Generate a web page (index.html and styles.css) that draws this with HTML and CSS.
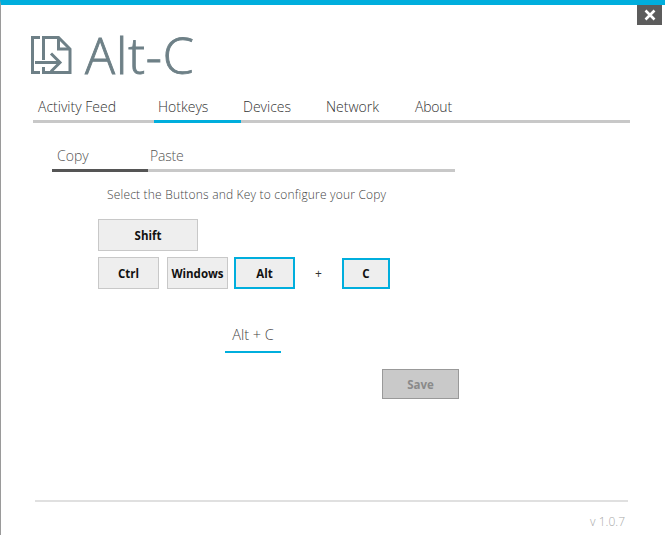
FILE: index.html
```html
<!DOCTYPE html>
<html lang="en">
<head>
<meta charset="utf-8">
<title>Alt-C</title>
<link rel="stylesheet" href="styles.css">
</head>
<body>
<div class="window">
  <button class="close" aria-label="Close">
    <svg width="12" height="12" viewBox="0 0 12 12"><path d="M1.5 1.5l9 9M10.5 1.5l-9 9" stroke="#fff" stroke-width="2.6" fill="none"/></svg>
  </button>
  <header class="brand">
    <svg class="logo" width="41" height="38" viewBox="0 0 41 38" fill="none" stroke="#6e8087" stroke-width="3">
      <path d="M9 1.5H1.5V36.5H9"/>
      <path d="M12.5 24V1.500H27.500L39 13V36.500H12.5V31"/>
      <path d="M27.500 1.500V13H39"/>
      <path d="M4 26.500H28"/>
      <path d="M20 17.500L29 26.500L20 35.500"/>
    </svg>
    <span class="brand-name">Alt-C</span>
  </header>
  <nav class="tabs">
    <a class="tab tab-feed">Activity Feed</a>
    <a class="tab tab-hotkeys active">Hotkeys</a>
    <a class="tab tab-devices">Devices</a>
    <a class="tab tab-network">Network</a>
    <a class="tab tab-about">About</a>
  </nav>
  <main class="panel">
    <div class="subtabs">
      <a class="subtab active">Copy</a>
      <a class="subtab">Paste</a>
    </div>
    <p class="hint">Select the Buttons and Key to configure your Copy</p>
    <div class="keys">
      <button class="key key-shift">Shift</button>
      <div class="key-row">
        <button class="key key-mod">Ctrl</button>
        <button class="key key-mod">Windows</button>
        <button class="key key-mod selected">Alt</button>
        <span class="plus">+</span>
        <button class="key key-letter selected">C</button>
      </div>
    </div>
    <div class="combo">Alt + C</div>
    <button class="save">Save</button>
  </main>
  <footer class="footer">v 1.0.7</footer>
</div>
</body>
</html>
```

FILE: styles.css
```css
* { box-sizing: border-box; }
html, body { margin: 0; padding: 0; background: #fff; }
body { font-family: "Open Sans", "Noto Sans", sans-serif; overflow: hidden; }
.window {
  position: relative;
  width: 665px;
  height: 535px;
  border-top: 5px solid #00aedd;
  border-left: 1px solid #9a9a9a;
  display: flex;
  flex-direction: column;
}
.close {
  position: absolute;
  top: 0;
  right: 3px;
  width: 25px;
  height: 20px;
  padding: 0;
  border: 0;
  background: #5c5c5c;
  display: flex;
  align-items: center;
  justify-content: center;
}
.brand {
  display: flex;
  align-items: center;
  height: 50px;
  margin-top: 25px;
  padding-left: 30px;
}
.logo { flex: none; }
.brand-name {
  margin-left: 13px;
  font-size: 50px;
  font-weight: 300;
  line-height: 50px;
  color: #6e8087;
  letter-spacing: 0.9px;
  -webkit-text-stroke: 0.9px #6e8087;
}
.tabs {
  display: flex;
  width: 597px;
  height: 43px;
  margin-left: 32px;
  border-bottom: 3px solid #c8c8c8;
  font-size: 14px;
  font-weight: 300;
  color: #333;
}
.tab {
  display: block;
  height: 43px;
  line-height: 22px;
  padding-top: 16px;
  white-space: nowrap;
}
.tab.active { border-bottom: 3px solid #00aedd; }
.tab-feed { width: 121px; padding-left: 5px; }
.tab-hotkeys { width: 87px; padding-left: 4px; }
.tab-devices { width: 85px; padding-left: 2px; }
.tab-network { width: 89px; }
.tab-about { width: 60px; letter-spacing: -0.2px; }
.panel {
  display: flex;
  flex-direction: column;
  align-items: flex-start;
  padding-left: 51px;
  flex: 1;
}
.subtabs {
  display: flex;
  width: 403px;
  height: 49px;
  border-bottom: 3px solid #c8c8c8;
  font-size: 14px;
  font-weight: 300;
  color: #555;
}
.subtab {
  display: block;
  width: 96px;
  height: 49px;
  padding: 22px 0 0 5px;
  line-height: 22px;
}
.subtab.active { border-bottom: 3px solid #555; }
.subtab + .subtab { padding-left: 2px; letter-spacing: -0.2px; }
.hint {
  margin: 14px 0 0 55px;
  font-size: 12px;
  font-weight: 300;
  line-height: 18px;
  color: #444;
  letter-spacing: 0.19px;
}
.keys {
  margin: 15px 0 0 46px;
  display: flex;
  flex-direction: column;
  gap: 6px;
}
.key-row { display: flex; align-items: flex-end; }
.key {
  height: 32px;
  padding: 0;
  border: 1px solid #c8c8c8;
  background: #eee;
  font-family: inherit;
  font-size: 11.500px;
  font-weight: 700;
  color: #111;
}
.key-shift { width: 100px; }
.key-mod { width: 61px; margin-right: 8px; }
.key-mod:nth-child(2) { margin-right: 6px; }
.key-mod.selected { margin-right: 0; }
.key-letter { width: 48px; height: 31px; }
.selected { border: 2px solid #00aedd; }
.plus {
  width: 47px;
  align-self: center;
  text-align: center;
  font-size: 12px;
  font-weight: 400;
  color: #333;
}
.combo {
  width: 56px;
  height: 34px;
  margin: 30px 0 0 173px;
  border-bottom: 2px solid #00aedd;
  text-align: center;
  font-size: 14.500px;
  font-weight: 300;
  line-height: 32px;
  color: #444;
}
.save {
  width: 77px;
  height: 30px;
  margin: 16px 0 0 330px;
  padding: 0;
  border: 1px solid #999;
  background: #c9c9c9;
  font-family: inherit;
  font-size: 11.500px;
  font-weight: 700;
  color: #8a8a8a;
}
.footer {
  width: 593px;
  height: 35px;
  margin: 0 0 0 34px;
  position: absolute;
  top: 495px;
  border-top: 2px solid #e0e0e0;
  padding: 11px 3px 0 0;
  text-align: right;
  font-size: 12px;
  font-weight: 300;
  line-height: 18px;
  color: #aaa;
}
```
